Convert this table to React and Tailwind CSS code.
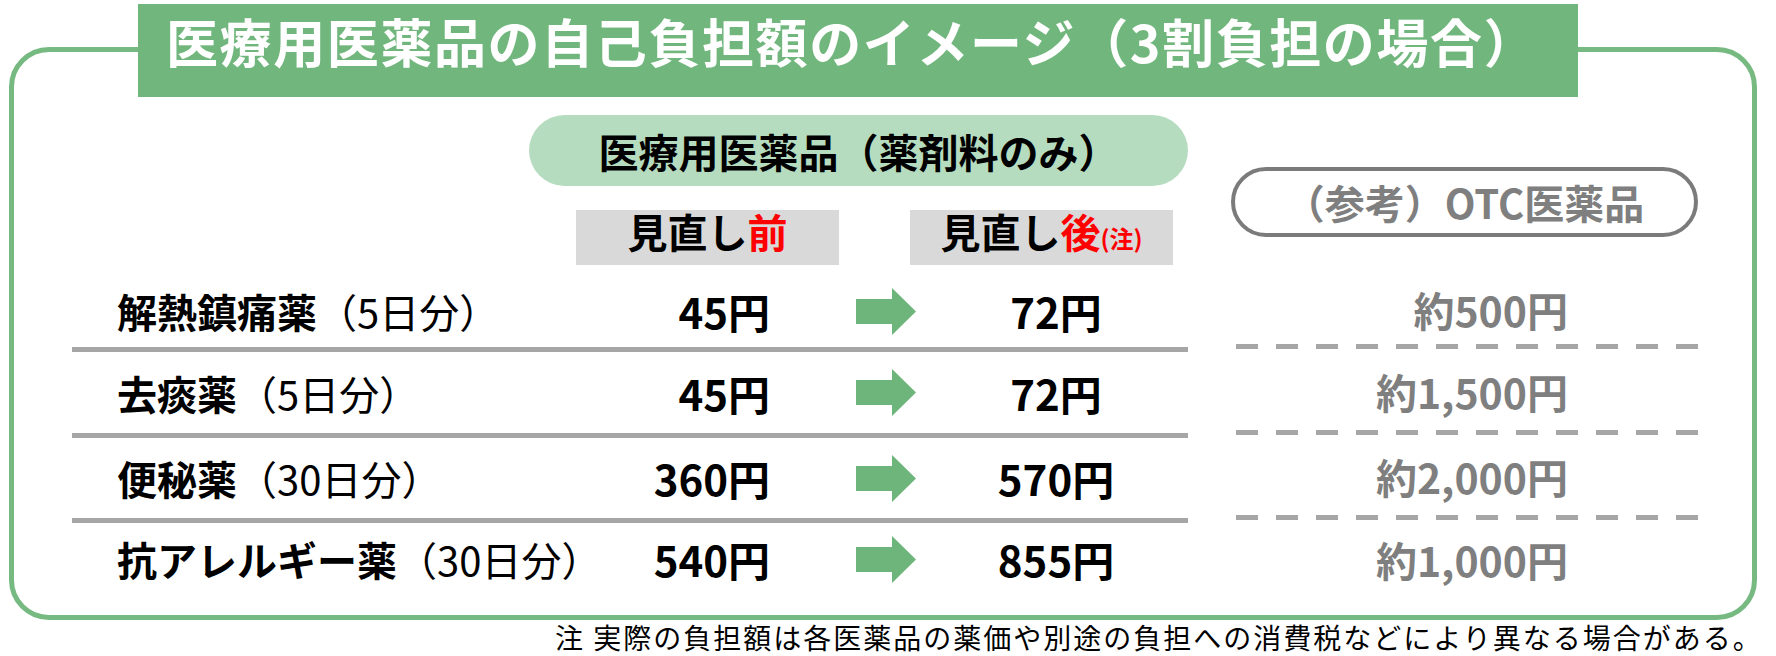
import React from 'react'

const rows = [
    { name: '解熱鎮痛薬', days: '（5日分）', before: '45円', after: '72円', otc: '約500円', h: 'h-[87px]', pt: 'pt-[10px]' },
    { name: '去痰薬', days: '（5日分）', before: '45円', after: '72円', otc: '約1,500円', h: 'h-[86px]', pt: '' },
    { name: '便秘薬', days: '（30日分）', before: '360円', after: '570円', otc: '約2,000円', h: 'h-[85px]', pt: '' },
    { name: '抗アレルギー薬', days: '（30日分）', before: '540円', after: '855円', otc: '約1,000円', h: 'h-[72px]', pt: '' },
]

const Arrow = () => (
    <svg width="60" height="47" viewBox="0 0 60 47" className="shrink-0 ml-[86px]">
        <polygon points="0,11 36,11 36,0 60,23.5 36,47 36,36 0,36" fill="#6db57b" />
    </svg>
)

const Dashes = () => (
    <div className="flex gap-[18px] mb-[3px]">
        {Array.from({ length: 12 }).map((_, i) => (
            <div key={i} className="w-[22px] h-[5px] bg-[#a6a6a6]" />
        ))}
    </div>
)

const App = () => {
    return (
        <div className="w-[1776px] h-[656px] bg-white overflow-hidden text-black font-['Noto_Sans_CJK_JP','Noto_Sans',sans-serif]">
            {/* outer frame */}
            <div className="ml-[9px] mt-[47px] w-[1748px] h-[573px] border-[5px] border-[#76ba82] rounded-[40px] flex flex-col">
                <div className="-mt-[48px] ml-[124px] w-[1440px] h-[93px] shrink-0 bg-[#71b77d] pl-[28px] pt-[11px]">
                    <p className="text-[52px] font-bold leading-none text-white tracking-[1.6px] whitespace-nowrap">
                        医療用医薬品の自己負担額のイメージ（3割負担の場合）
                    </p>
                </div>

                {/* headers */}
                <div className="mt-[18px] flex">
                    <div className="ml-[58px] w-[1116px] flex flex-col">
                        <div className="ml-[457px] w-[659px] h-[71px] rounded-full bg-[#b6dcc0] flex items-center justify-center text-[40px] font-bold leading-none whitespace-nowrap">
                            医療用医薬品（薬剤料のみ）
                        </div>
                        <div className="mt-[24px] flex">
                            <div className="ml-[504px] w-[263px] h-[55px] bg-[#d9d9d9] flex justify-center pt-[1px] text-[40px] font-bold leading-none whitespace-nowrap">
                                見直し<span className="text-[#ff0000]">前</span>
                            </div>
                            <div className="ml-[71px] w-[263px] h-[55px] bg-[#d9d9d9] flex justify-center pt-[1px] text-[40px] font-bold leading-none whitespace-nowrap">
                                <span>
                                    見直し<span className="text-[#ff0000]">後<span className="text-[24px]">(注)</span></span>
                                </span>
                            </div>
                        </div>
                    </div>
                    <div className="ml-[43px] mt-[52px] w-[467px] h-[70px] rounded-full border-[4px] border-[#7b7b7b] flex items-center justify-center text-[40px] font-bold text-[#7f7f7f] leading-none whitespace-nowrap">
                        （参考）OTC医薬品
                    </div>
                </div>

                {/* rows */}
                <div className="flex flex-col">
                    {rows.map((row, idx) => {
                        const last = idx === rows.length - 1
                        return (
                            <div key={row.name} className={`flex ${row.h}`}>
                                <div className={`ml-[58px] w-[1116px] h-full flex items-center pl-[45px] ${row.pt} ${last ? '' : 'border-b-[5px] border-[#a6a6a6]'}`}>
                                    <div className="w-[450px] text-[40px] leading-none whitespace-nowrap">
                                        <span className="font-bold">{row.name}</span>
                                        <span className="font-normal">{row.days}</span>
                                    </div>
                                    <div className="w-[203px] text-right text-[42px] font-bold leading-none whitespace-nowrap">
                                        {row.before}
                                    </div>
                                    <Arrow />
                                    <div className="ml-[40px] w-[200px] text-center text-[42px] font-bold leading-none whitespace-nowrap">
                                        {row.after}
                                    </div>
                                </div>
                                <div className="ml-[48px] w-[462px] h-full flex flex-col">
                                    <div className={`flex-1 flex items-center justify-end pr-[130px] text-[41px] font-bold text-[#7f7f7f] leading-none whitespace-nowrap ${row.pt}`}>
                                        {row.otc}
                                    </div>
                                    {!last && <Dashes />}
                                </div>
                            </div>
                        )
                    })}
                </div>
            </div>

            <p className="mt-[3px] ml-[555px] text-[28px] leading-none tracking-[2px] whitespace-nowrap">
                注 実際の負担額は各医薬品の薬価や別途の負担への消費税などにより異なる場合がある。
            </p>
        </div>
    )
}

export default App
